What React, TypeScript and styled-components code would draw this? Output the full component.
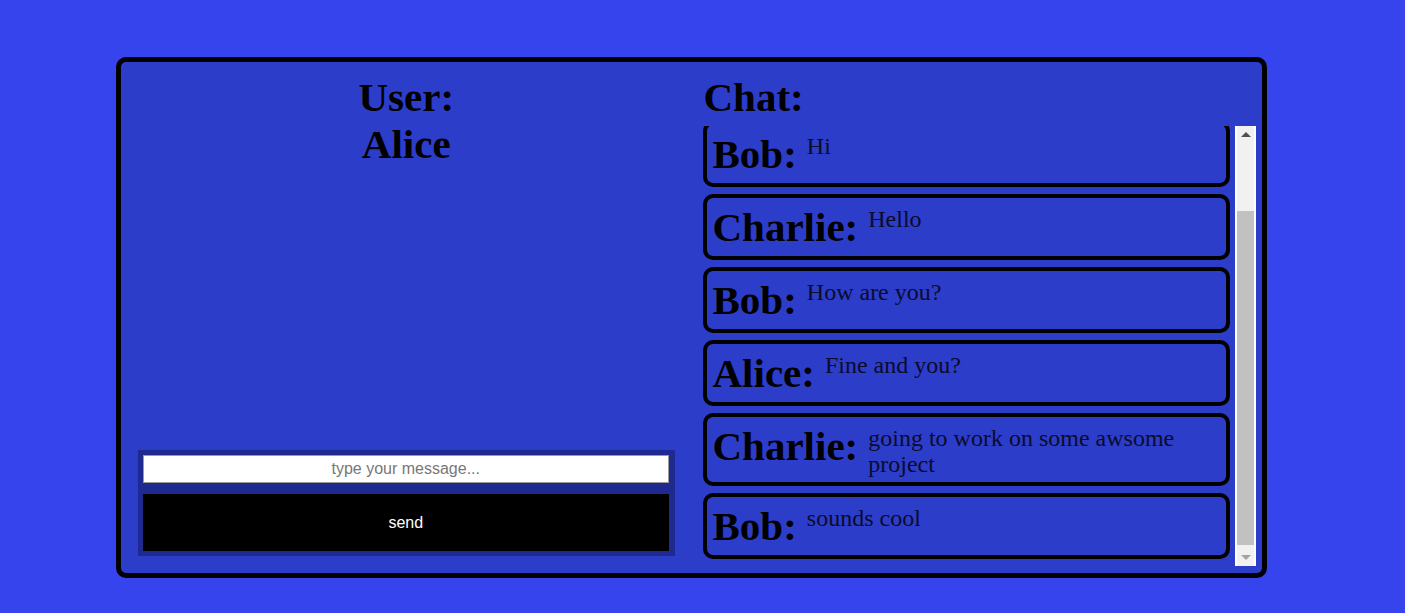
import React, { useLayoutEffect, useRef } from "react";
import styled, { createGlobalStyle } from "styled-components";

const GlobalStyle = createGlobalStyle`
  html, body {
    margin: 0;
    padding: 0;
    background: #3544ec;
  }
  body {
    font-family: "Liberation Serif", serif;
  }
`;

const Page = styled.div`
  width: 1405px;
  height: 613px;
  padding: 57px 0 0 116px;
  box-sizing: border-box;
`;

const Panel = styled.div`
  width: 1151px;
  height: 521px;
  box-sizing: border-box;
  border: 5px solid #000;
  border-radius: 10px;
  background: #2c3dca;
  display: grid;
  grid-template-columns: 1fr 1fr;
`;

const UserColumn = styled.div`
  display: flex;
  flex-direction: column;
  min-height: 0;
`;

const Heading = styled.h1<{ $center?: boolean }>`
  margin: 0;
  padding-top: 12px;
  font-family: "Liberation Serif", serif;
  font-size: 41px;
  font-weight: bold;
  line-height: 47px;
  color: #000;
  text-align: ${(p) => (p.$center ? "center" : "left")};
`;

const Composer = styled.form`
  margin: auto 17px 17px;
  padding: 5px 6px 5px 5px;
  background: #1e2a8f;
  display: flex;
  flex-direction: column;
  gap: 11px;
`;

const MessageInput = styled.input`
  height: 28px;
  box-sizing: border-box;
  border: 1px solid #9a9a9a;
  background: #fff;
  font-family: "Liberation Sans", Arial, sans-serif;
  font-size: 16px;
  text-align: center;
  outline: none;

  &::placeholder {
    color: #777;
  }
`;

const SendButton = styled.button`
  height: 57px;
  border: none;
  background: #000;
  color: #fff;
  font-family: "Liberation Sans", Arial, sans-serif;
  font-size: 16px;
  cursor: pointer;
`;

const ChatColumn = styled.div`
  display: flex;
  flex-direction: column;
  padding: 0 6px 7px 12px;
  min-height: 0;
`;

const ChatBody = styled.div`
  margin-top: 5px;
  margin-left: -1px;
  flex: 1;
  min-height: 0;
  display: flex;
`;

const MessageList = styled.div`
  flex: 1;
  min-height: 0;
  overflow: hidden;
  padding-top: 89px;
  padding-bottom: 7px;
  box-sizing: border-box;
  display: flex;
  flex-direction: column;
  gap: 7px;
`;

const ScrollTrack = styled.div`
  width: 17px;
  background: #f1f1f1;
  border-left: 2px solid #fff;
  border-right: 2px solid #fff;
  display: flex;
  flex-direction: column;
`;

const ScrollArrow = styled.div<{ $down?: boolean }>`
  height: 17px;
  display: flex;
  align-items: center;
  justify-content: center;

  &::after {
    content: "";
    width: 0;
    height: 0;
    border-left: 5px solid transparent;
    border-right: 5px solid transparent;
    ${(p) =>
      p.$down
        ? "border-top: 5px solid #a3a3a3;"
        : "border-bottom: 5px solid #505050;"}
  }
`;

const ScrollSpace = styled.div`
  flex: 1;
  display: flex;
  flex-direction: column;
  justify-content: flex-end;
  padding-bottom: 4px;
`;

const ScrollThumb = styled.div`
  height: 334px;
  background: #c1c1c1;
`;

const Card = styled.div`
  flex-shrink: 0;
  margin-right: 5px;
  border: 4px solid #000;
  border-radius: 10px;
  padding: 6px 10px 5px 6px;
  display: flex;
  align-items: flex-start;
`;

const Sender = styled.span`
  flex-shrink: 0;
  font-size: 41px;
  font-weight: bold;
  line-height: 47px;
  color: #000;
  margin-right: 10px;
`;

const Text = styled.span`
  margin-top: 2px;
  font-size: 24px;
  line-height: 26px;
  color: #0b0b2a;
`;

const messages = [
  { from: "Bob", text: "Hi" },
  { from: "Charlie", text: "Hello" },
  { from: "Bob", text: "How are you?" },
  { from: "Alice", text: "Fine and you?" },
  { from: "Charlie", text: "going to work on some awsome project" },
  { from: "Bob", text: "sounds cool" },
];

export default function App() {
  const listRef = useRef<HTMLDivElement>(null);

  useLayoutEffect(() => {
    if (listRef.current) listRef.current.scrollTop = listRef.current.scrollHeight;
  }, []);

  return (
    <Page>
      <GlobalStyle />
      <Panel>
        <UserColumn>
          <Heading $center>
            User:
            <br />
            Alice
          </Heading>
          <Composer onSubmit={(e) => e.preventDefault()}>
            <MessageInput placeholder="type your message..." />
            <SendButton type="submit">send</SendButton>
          </Composer>
        </UserColumn>
        <ChatColumn>
          <Heading>Chat:</Heading>
          <ChatBody>
            <MessageList ref={listRef}>
              {messages.map((m, i) => (
                <Card key={i}>
                  <Sender>{m.from}:</Sender>
                  <Text>{m.text}</Text>
                </Card>
              ))}
            </MessageList>
            <ScrollTrack>
              <ScrollArrow />
              <ScrollSpace>
                <ScrollThumb />
              </ScrollSpace>
              <ScrollArrow $down />
            </ScrollTrack>
          </ChatBody>
        </ChatColumn>
      </Panel>
    </Page>
  );
}
